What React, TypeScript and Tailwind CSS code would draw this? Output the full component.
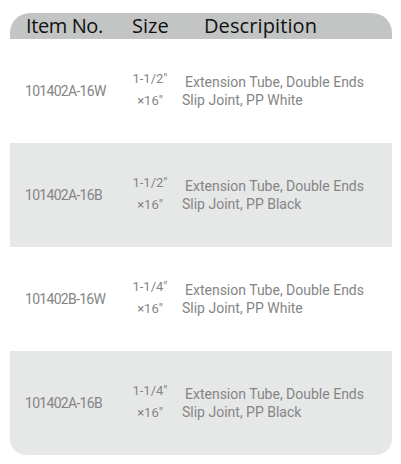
const rows = [
  { item: "101402A-16W", size: "1-1/2\"", desc: "Slip Joint, PP White", shade: false },
  { item: "101402A-16B", size: "1-1/2\"", desc: "Slip Joint, PP Black", shade: true },
  { item: "101402B-16W", size: "1-1/4\"", desc: "Slip Joint, PP White", shade: false },
  { item: "101402A-16B", size: "1-1/4\"", desc: "Slip Joint, PP Black", shade: true },
];

export default function App() {
  return (
    <div className="w-[401px] h-[464px] bg-white pt-[13px] px-[10px]" style={{ fontFamily: "Roboto, sans-serif" }}>
      <div className="w-[382px]">
        <div
          className="h-[26px] bg-[#c3c5c4] rounded-t-[20px] flex items-center text-[20px] text-[#111] leading-none"
          style={{ fontFamily: "'Open Sans', sans-serif" }}
        >
          <span className="ml-[16px] w-[106px] tracking-[-0.4px]">Item No.</span>
          <span className="w-[72px]">Size</span>
          <span className="tracking-[0.1px]">Descripition</span>
        </div>
        {rows.map((r, i) => (
          <div
            key={i}
            className={`h-[104px] flex items-center text-[#858585] ${r.shade ? "bg-[#e6e7e7]" : "bg-white"} ${i === rows.length - 1 ? "rounded-b-[16px]" : ""}`}
          >
            <div className="ml-[15px] w-[100px] text-[14px] tracking-[-0.7px]">{r.item}</div>
            <div className="w-[50px] flex flex-col items-center text-[13px] leading-[22px] -mt-[2px]">
              <span>{r.size}</span>
              <span>×16"</span>
            </div>
            <div className="ml-[7px] text-[14px] leading-[18px]">
              <div className="pl-[3px]">Extension Tube, Double Ends</div>
              <div>{r.desc}</div>
            </div>
          </div>
        ))}
      </div>
    </div>
  );
}
